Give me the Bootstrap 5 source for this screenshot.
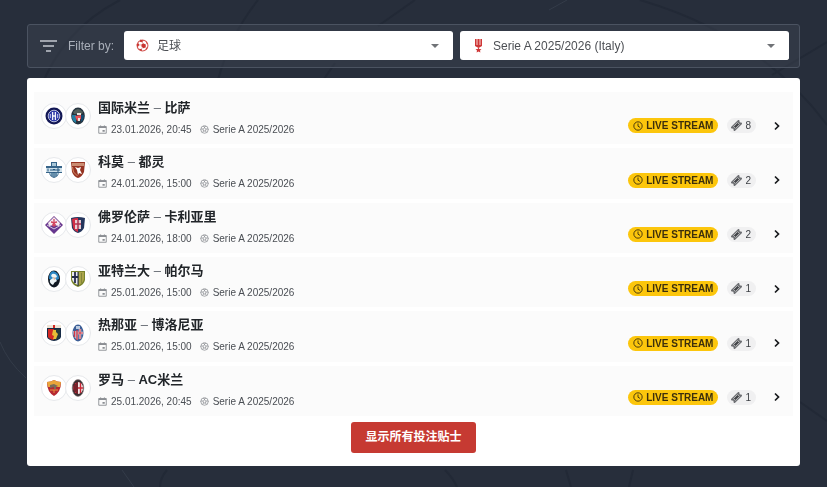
<!DOCTYPE html>
<html lang="zh-CN">
<head>
<meta charset="utf-8">
<meta name="viewport" content="width=device-width, initial-scale=1">
<title>Serie A 2025/2026</title>
<link href="https://cdn.jsdelivr.net/npm/bootstrap@5.3.0/dist/css/bootstrap.min.css" rel="stylesheet">
<style>
body{background:#272e3b;color:#212529;font-family:"Liberation Sans","Noto Sans CJK SC",sans-serif;font-size:12px}
.backdrop{position:fixed;inset:0;width:100%;height:100%;z-index:-1}
.page{padding:24px 27px 20px}
.filters{background:rgba(62,69,81,.45);border:1px solid #4b5361;border-radius:3px;padding:6px 10px 7px 12px;margin-bottom:10px}
.filter-label{color:#a9afb9;margin:0 10px 0 11px}
.picker{background:#fff;border-radius:3px;height:29px;padding-left:12px}
.picker .form-select{border:0;border-radius:3px;box-shadow:none;color:#4c4f54;font-size:12px;line-height:20px;padding:4px 32px 4px 8px;background-color:#fff;background-image:url("data:image/svg+xml,%3Csvg xmlns='http://www.w3.org/2000/svg' viewBox='0 0 10 5'%3E%3Cpath d='M0 0h10L5 5z' fill='%23707377'/%3E%3C/svg%3E");background-size:8px 4px;background-position:right 14px center}
.panel{background:#fff;border-radius:3px;padding:16px 7px 13px}
.matches{gap:4px;min-height:322px;margin-bottom:6px}
.match{background:#fbfbfb;padding:0 5px 0 7px}
.match:first-child{box-shadow:0 -2px #fbfbfb}
.crests{padding-top:9px;width:50px}
.crest{width:26px;height:26px;border:1px solid #e7e9ec;border-radius:50%;background:#fff;display:flex;align-items:center;justify-content:center;margin-right:-2px}
.crest svg{width:18px;height:18px}
.match-info{padding:4px 0 0 7px}
.match-info h2{font-size:13px;line-height:20px;font-weight:700;margin:0 0 3px}
.match-info h2 span{font-weight:400;color:#60656d}
.meta{font-size:10px;line-height:17px;color:#4a4e54;gap:8px}
.meta span{display:flex;align-items:center;gap:4px}
.meta svg{width:9px;height:9px;color:#8b8e93}
.extras{padding-bottom:11px;gap:9px}
.live{background:#fcc60c;color:#3c2f0c;border-radius:8px;height:15px;line-height:15px;padding:0 5px;font-size:10px;font-weight:700;gap:3px}
.live svg{width:10px;height:10px}
.tips{background:#f0f0f1;color:#3d4045;border-radius:8px;height:15px;line-height:15px;padding:0 5px 0 4px;font-size:10px;gap:3px}
.tips svg{width:11px;height:11px}
.go{color:#17191c;width:23px;height:15px}
.go svg{width:8px;height:10px}
.show-all{background:#c63a32;color:#fff;border:0;border-radius:3px;font-size:12px;line-height:19px;font-weight:700;padding:6px 14px}
.show-all:hover{background:#ad3029;color:#fff}
</style>
</head>
<body>
<svg class="backdrop" viewBox="0 0 827 487" preserveAspectRatio="xMidYMid slice" fill="none" aria-hidden="true">
<g stroke="#222936" stroke-width="2">
<path d="M120 0Q62 30 40 90M258 0Q230 35 218 80M415 0L378 26M335 63L322 82M640 0Q760 35 827 125M827 42L772 75M800 402L827 421M167 470Q160 478 160 487M445 470Q453 478 457 487M566 470L571 487M629 487L633 470"/>
</g>
<g stroke="#343c49"><path d="M0 342Q8 362 26 378M122 470L134 487M549 10L567 0"/></g>
</svg>
<svg width="0" height="0" class="position-absolute" aria-hidden="true">
<symbol id="cal" viewBox="0 0 24 24"><path fill="none" stroke="currentColor" stroke-width="2.400" d="M2 4h20v18H2zM7 1v4M17 1v4"/><path fill="currentColor" d="M2 4h20v4H2zM12 13h6v5h-6z"/></symbol>
<symbol id="ball" viewBox="0 0 24 24"><g fill="none" stroke="currentColor" stroke-width="2"><circle cx="12" cy="12" r="10"/><path d="M12 8l4 3-1.500 5h-5L8 11zM12 8V5L8 2.500M12 5l4-2.500M8 11l-4-1-2 3M16 11l4-1 2 3M9.500 16L7 19M14.500 16l2.500 3"/></g></symbol>
<symbol id="clock" viewBox="0 0 24 24"><g fill="none" stroke="currentColor" stroke-width="2.200"><circle cx="12" cy="12" r="10"/><path d="M12 6v6.500l5 3"/></g></symbol>
<symbol id="ticket" viewBox="0 0 24 24"><g transform="rotate(-45 12 12)"><path fill="#6c6e72" d="M0 6h24v4a2 2 0 000 4v4H0v-4a2 2 0 000-4z"/><path d="M6 9h12v6H6z" fill="#45474b" stroke="#dcdcdd" stroke-width="1.500"/></g></symbol>
<symbol id="next" viewBox="0 0 8 10"><path fill="none" stroke="currentColor" stroke-width="1.700" d="M2 1.500L5.500 5 2 8.500"/></symbol>
<symbol id="inter" viewBox="0 0 18 18"><circle cx="9" cy="9" r="8.500" fill="#121755"/><circle cx="9" cy="9" r="5.800" fill="#2c38a6" stroke="#dfe3f4" stroke-width=".8"/><path d="M7.600 5v8M10.400 5v8M7.600 9h2.800" stroke="#f3f4fb" stroke-width="1.300"/><path d="M5.300 7v4M12.700 7v4" stroke="#c9cdef"/></symbol>
<symbol id="pisa" viewBox="0 0 18 18"><ellipse cx="9" cy="9" rx="6.800" ry="8.500" fill="#25333f"/><path d="M4 5Q9-1 14 5l-1 2H5z" fill="#53605b"/><path d="M3 8h4v8Q2 13 3 8z" fill="#2480a2"/><path d="M6 9l6-1v4l-4 2z" fill="#e95054"/><path d="M8 6h4v2H8zM9 11h2v3H9z" fill="#e8e5df"/><path d="M12 8h3q0 5-3 7z" fill="#174d73"/></symbol>
<symbol id="como" viewBox="0 0 18 18"><path d="M6 1h6v4h5v7h-3q-1 4-5 5-4-1-5-5H1V5h5z" fill="#38658a"/><path d="M7 2h4v3H7zM4 12h10q-2 3-5 4-3-1-5-4z" fill="#a9c7d8"/><path d="M1 7h16v4H1z" fill="#cfe1eb"/><path d="M3 7.500v3M5 9h2M8 10V8l1 1 1-1v2M12 8h2v2h-2z" fill="none" stroke="#24577e"/><path d="M7 12v3M9 11v5M11 12v3" stroke="#24577e"/></symbol>
<symbol id="torino" viewBox="0 0 18 18"><path d="M2 1h14l-1 10q-2 5-6 6-4-1-6-6z" fill="#963423"/><path d="M3 2h12v3H3z" fill="#cb8d72"/><path d="M6 6l3 1 3-1-1 3 2 4-3-1-1 2-1-5z" fill="#fff"/><path d="M3.500 6l1 5 4 4" fill="none" stroke="#d68c66"/></symbol>
<symbol id="fiorentina" viewBox="0 0 18 18"><path d="M9 0l9 9-9 9-9-9z" fill="#653790" stroke="#b995bd" stroke-width=".7"/><path d="M9 1l6 6-1 3-5-1-5 1-1-3z" fill="#f6eaf0"/><path d="M9 3v8M6 6q3 0 3 3 0-3 3-3M7 9h4" fill="none" stroke="#d34661" stroke-width="1.300"/><path d="M2 9l7 4 7-4" fill="none" stroke="#d7c5de"/></symbol>
<symbol id="cagliari" viewBox="0 0 18 18"><path d="M2 2q7-2 14 0l-1 10q-2 4-6 5-4-1-6-5z" fill="#25365d"/><path d="M3 3q3-1 6-1v14q-4-1-5-5z" fill="#d42e45"/><path d="M6 4h6v9H6z" fill="#e6ccd3"/><path d="M9 4v9M6 8h6" stroke="#ad3150" stroke-width="1.500"/></symbol>
<symbol id="atalanta" viewBox="0 0 18 18"><ellipse cx="9" cy="9" rx="6" ry="8.500" fill="#111923"/><path d="M8 1q6 1 6 8l-5 2-5-2Q4 2 8 1z" fill="#2b86c4"/><path d="M7 4q4-1 5 3l-2 1 2 3q-3 1-4 4-4-2-3-5l3-2-2-2z" fill="#edf4f6"/><path d="M8 7l3 1-2 2z" fill="#d7a990"/></symbol>
<symbol id="parma" viewBox="0 0 18 18"><path d="M2 1h14v9q-1 5-7 7-6-2-7-7z" fill="#78832b"/><path d="M3 2h6v13q-5-2-6-6z" fill="#e9eaf0"/><path d="M6 2v11M3 7h6" stroke="#252a4c" stroke-width="1.800"/><path d="M9 2v14" stroke="#252a4c"/><path d="M10 2h5v7q-1 4-5 6z" fill="#aaa44a"/><path d="M12.500 3v10" stroke="#83853b"/></symbol>
<symbol id="genoa" viewBox="0 0 18 18"><path d="M2 1h14v12q-1 3-7 4-6-1-7-4z" fill="#162b46"/><path d="M2 1h14v3H2z" fill="#eee4d6"/><path d="M8 1h2v3H8zM3 5h6v11q-5-1-6-3z" fill="#d32924"/><path d="M9 5h6v8q-1 2-6 3z" fill="#263b3d"/><path d="M8 6h3v2l2 2-2 5H8l1-3-2-1z" fill="#e8bd37"/></symbol>
<symbol id="bologna" viewBox="0 0 18 18"><ellipse cx="9" cy="9" rx="5.500" ry="8.500" fill="#3c5e96"/><path d="M4 7h5v9q-5-2-5-9z" fill="#b9bdce"/><path d="M7 2h4v3H7z" fill="#bacae0"/><path d="M5.500 7v6M8 6v10" stroke="#d53744" stroke-width="1.300"/><path d="M11 5v10M9 9h5" stroke="#e7e3e9" stroke-width="2.400"/><path d="M11 5v10M9 9h5" stroke="#cb3340"/></symbol>
<symbol id="roma" viewBox="0 0 18 18"><path d="M2 3q4 0 7-2 3 2 7 2 0 10-7 14Q2 13 2 3z" fill="#b62932"/><path d="M2 3q4 0 7-2 3 2 7 2l-1 5H3z" fill="#eaa63a"/><path d="M5 6l4-1 4 2-2 1v2H9V8L5 9z" fill="#796c59"/><path d="M5 11h8M9 11v3" stroke="#e7903e"/></symbol>
<symbol id="milan" viewBox="0 0 18 18"><ellipse cx="9" cy="9" rx="5.800" ry="8.500" fill="#3a3033" stroke="#908587" stroke-width=".6"/><ellipse cx="9" cy="9" rx="4.700" ry="6" fill="#cb2837"/><path d="M6 5v8M8 3v12" stroke="#261f23"/><path d="M9 3q5 1 5 6t-5 6z" fill="#efe9e9"/><path d="M11.500 4v10M9 9h5" stroke="#cb2837" stroke-width="1.400"/></symbol>
</svg>

<main class="container-fluid page">
<form class="filters d-flex align-items-center">
<svg width="17" height="12" viewBox="0 0 17 12" aria-hidden="true"><path d="M0 1h17M3 6h11M6 11h5" stroke="#c4c9d0" stroke-width="1.600"/></svg>
<label class="filter-label text-nowrap" for="sport">Filter by:</label>
<div class="d-flex flex-fill" style="gap:7px">
<div class="picker d-flex align-items-center w-100">
<svg width="13" height="13" viewBox="0 0 24 24" class="flex-shrink-0" aria-hidden="true"><circle cx="12" cy="12" r="10" fill="#fff" stroke="#d35a56" stroke-width="2"/><path d="M13 8l5 2v5l-4 2-4-3v-4zM8 1l6 2-3 3-4-1zM1 10l4-2 1 3-3 4zM6 18l5 1v3l-5-2zM18 4l4 5-3-1zM17 19l4-4-1 4z" fill="#c93430"/><path d="M13 8l-2-3M10 11H5M12 15l-2 4M18 15l2 2M18 10l2-2" stroke="#d35a56"/></svg>
<select class="form-select" id="sport"><option>足球</option></select>
</div>
<div class="picker d-flex align-items-center w-100">
<svg width="13" height="15" viewBox="0 0 13 15" class="flex-shrink-0" aria-hidden="true"><path d="M3 1h7v7L6.500 10 3 8z" fill="#cf3737"/><path d="M5 1v6M8 1v6" stroke="#f6d5d1"/><path d="M6.500 9.500l.8 1.500 2.200.2-1.500 1.300.4 2-1.900-.9-1.900.9.400-2-1.500-1.300 2.200-.2z" fill="#cf3737"/></svg>
<select class="form-select" aria-label="League"><option>Serie A 2025/2026 (Italy)</option></select>
</div>
</div>
</form>

<section class="panel">
<div class="matches d-flex flex-column">
<article class="match d-flex flex-fill">
<div class="crests d-flex align-items-start"><span class="crest"><svg><use href="#inter"/></svg></span><span class="crest"><svg><use href="#pisa"/></svg></span></div>
<div class="match-info flex-fill"><h2>国际米兰 <span>–</span> 比萨</h2><div class="meta d-flex"><span><svg><use href="#cal"/></svg>23.01.2026, 20:45</span><span><svg><use href="#ball"/></svg>Serie A 2025/2026</span></div></div>
<div class="extras d-flex align-items-end"><span class="live d-flex align-items-center"><svg><use href="#clock"/></svg>LIVE STREAM</span><span class="tips d-flex align-items-center"><svg><use href="#ticket"/></svg>8</span><a href="#" class="go d-flex align-items-center justify-content-center" aria-label="国际米兰 – 比萨"><svg><use href="#next"/></svg></a></div>
</article>
<article class="match d-flex flex-fill">
<div class="crests d-flex align-items-start"><span class="crest"><svg><use href="#como"/></svg></span><span class="crest"><svg><use href="#torino"/></svg></span></div>
<div class="match-info flex-fill"><h2>科莫 <span>–</span> 都灵</h2><div class="meta d-flex"><span><svg><use href="#cal"/></svg>24.01.2026, 15:00</span><span><svg><use href="#ball"/></svg>Serie A 2025/2026</span></div></div>
<div class="extras d-flex align-items-end"><span class="live d-flex align-items-center"><svg><use href="#clock"/></svg>LIVE STREAM</span><span class="tips d-flex align-items-center"><svg><use href="#ticket"/></svg>2</span><a href="#" class="go d-flex align-items-center justify-content-center" aria-label="科莫 – 都灵"><svg><use href="#next"/></svg></a></div>
</article>
<article class="match d-flex flex-fill">
<div class="crests d-flex align-items-start"><span class="crest"><svg><use href="#fiorentina"/></svg></span><span class="crest"><svg><use href="#cagliari"/></svg></span></div>
<div class="match-info flex-fill"><h2>佛罗伦萨 <span>–</span> 卡利亚里</h2><div class="meta d-flex"><span><svg><use href="#cal"/></svg>24.01.2026, 18:00</span><span><svg><use href="#ball"/></svg>Serie A 2025/2026</span></div></div>
<div class="extras d-flex align-items-end"><span class="live d-flex align-items-center"><svg><use href="#clock"/></svg>LIVE STREAM</span><span class="tips d-flex align-items-center"><svg><use href="#ticket"/></svg>2</span><a href="#" class="go d-flex align-items-center justify-content-center" aria-label="佛罗伦萨 – 卡利亚里"><svg><use href="#next"/></svg></a></div>
</article>
<article class="match d-flex flex-fill">
<div class="crests d-flex align-items-start"><span class="crest"><svg><use href="#atalanta"/></svg></span><span class="crest"><svg><use href="#parma"/></svg></span></div>
<div class="match-info flex-fill"><h2>亚特兰大 <span>–</span> 帕尔马</h2><div class="meta d-flex"><span><svg><use href="#cal"/></svg>25.01.2026, 15:00</span><span><svg><use href="#ball"/></svg>Serie A 2025/2026</span></div></div>
<div class="extras d-flex align-items-end"><span class="live d-flex align-items-center"><svg><use href="#clock"/></svg>LIVE STREAM</span><span class="tips d-flex align-items-center"><svg><use href="#ticket"/></svg>1</span><a href="#" class="go d-flex align-items-center justify-content-center" aria-label="亚特兰大 – 帕尔马"><svg><use href="#next"/></svg></a></div>
</article>
<article class="match d-flex flex-fill">
<div class="crests d-flex align-items-start"><span class="crest"><svg><use href="#genoa"/></svg></span><span class="crest"><svg><use href="#bologna"/></svg></span></div>
<div class="match-info flex-fill"><h2>热那亚 <span>–</span> 博洛尼亚</h2><div class="meta d-flex"><span><svg><use href="#cal"/></svg>25.01.2026, 15:00</span><span><svg><use href="#ball"/></svg>Serie A 2025/2026</span></div></div>
<div class="extras d-flex align-items-end"><span class="live d-flex align-items-center"><svg><use href="#clock"/></svg>LIVE STREAM</span><span class="tips d-flex align-items-center"><svg><use href="#ticket"/></svg>1</span><a href="#" class="go d-flex align-items-center justify-content-center" aria-label="热那亚 – 博洛尼亚"><svg><use href="#next"/></svg></a></div>
</article>
<article class="match d-flex flex-fill">
<div class="crests d-flex align-items-start"><span class="crest"><svg><use href="#roma"/></svg></span><span class="crest"><svg><use href="#milan"/></svg></span></div>
<div class="match-info flex-fill"><h2>罗马 <span>–</span> AC米兰</h2><div class="meta d-flex"><span><svg><use href="#cal"/></svg>25.01.2026, 20:45</span><span><svg><use href="#ball"/></svg>Serie A 2025/2026</span></div></div>
<div class="extras d-flex align-items-end"><span class="live d-flex align-items-center"><svg><use href="#clock"/></svg>LIVE STREAM</span><span class="tips d-flex align-items-center"><svg><use href="#ticket"/></svg>1</span><a href="#" class="go d-flex align-items-center justify-content-center" aria-label="罗马 – AC米兰"><svg><use href="#next"/></svg></a></div>
</article>
</div>
<div class="text-center"><button type="button" class="btn show-all">显示所有投注贴士</button></div>
</section>
</main>
<script src="https://cdn.jsdelivr.net/npm/bootstrap@5.3.0/dist/js/bootstrap.bundle.min.js"></script>
</body>
</html>
